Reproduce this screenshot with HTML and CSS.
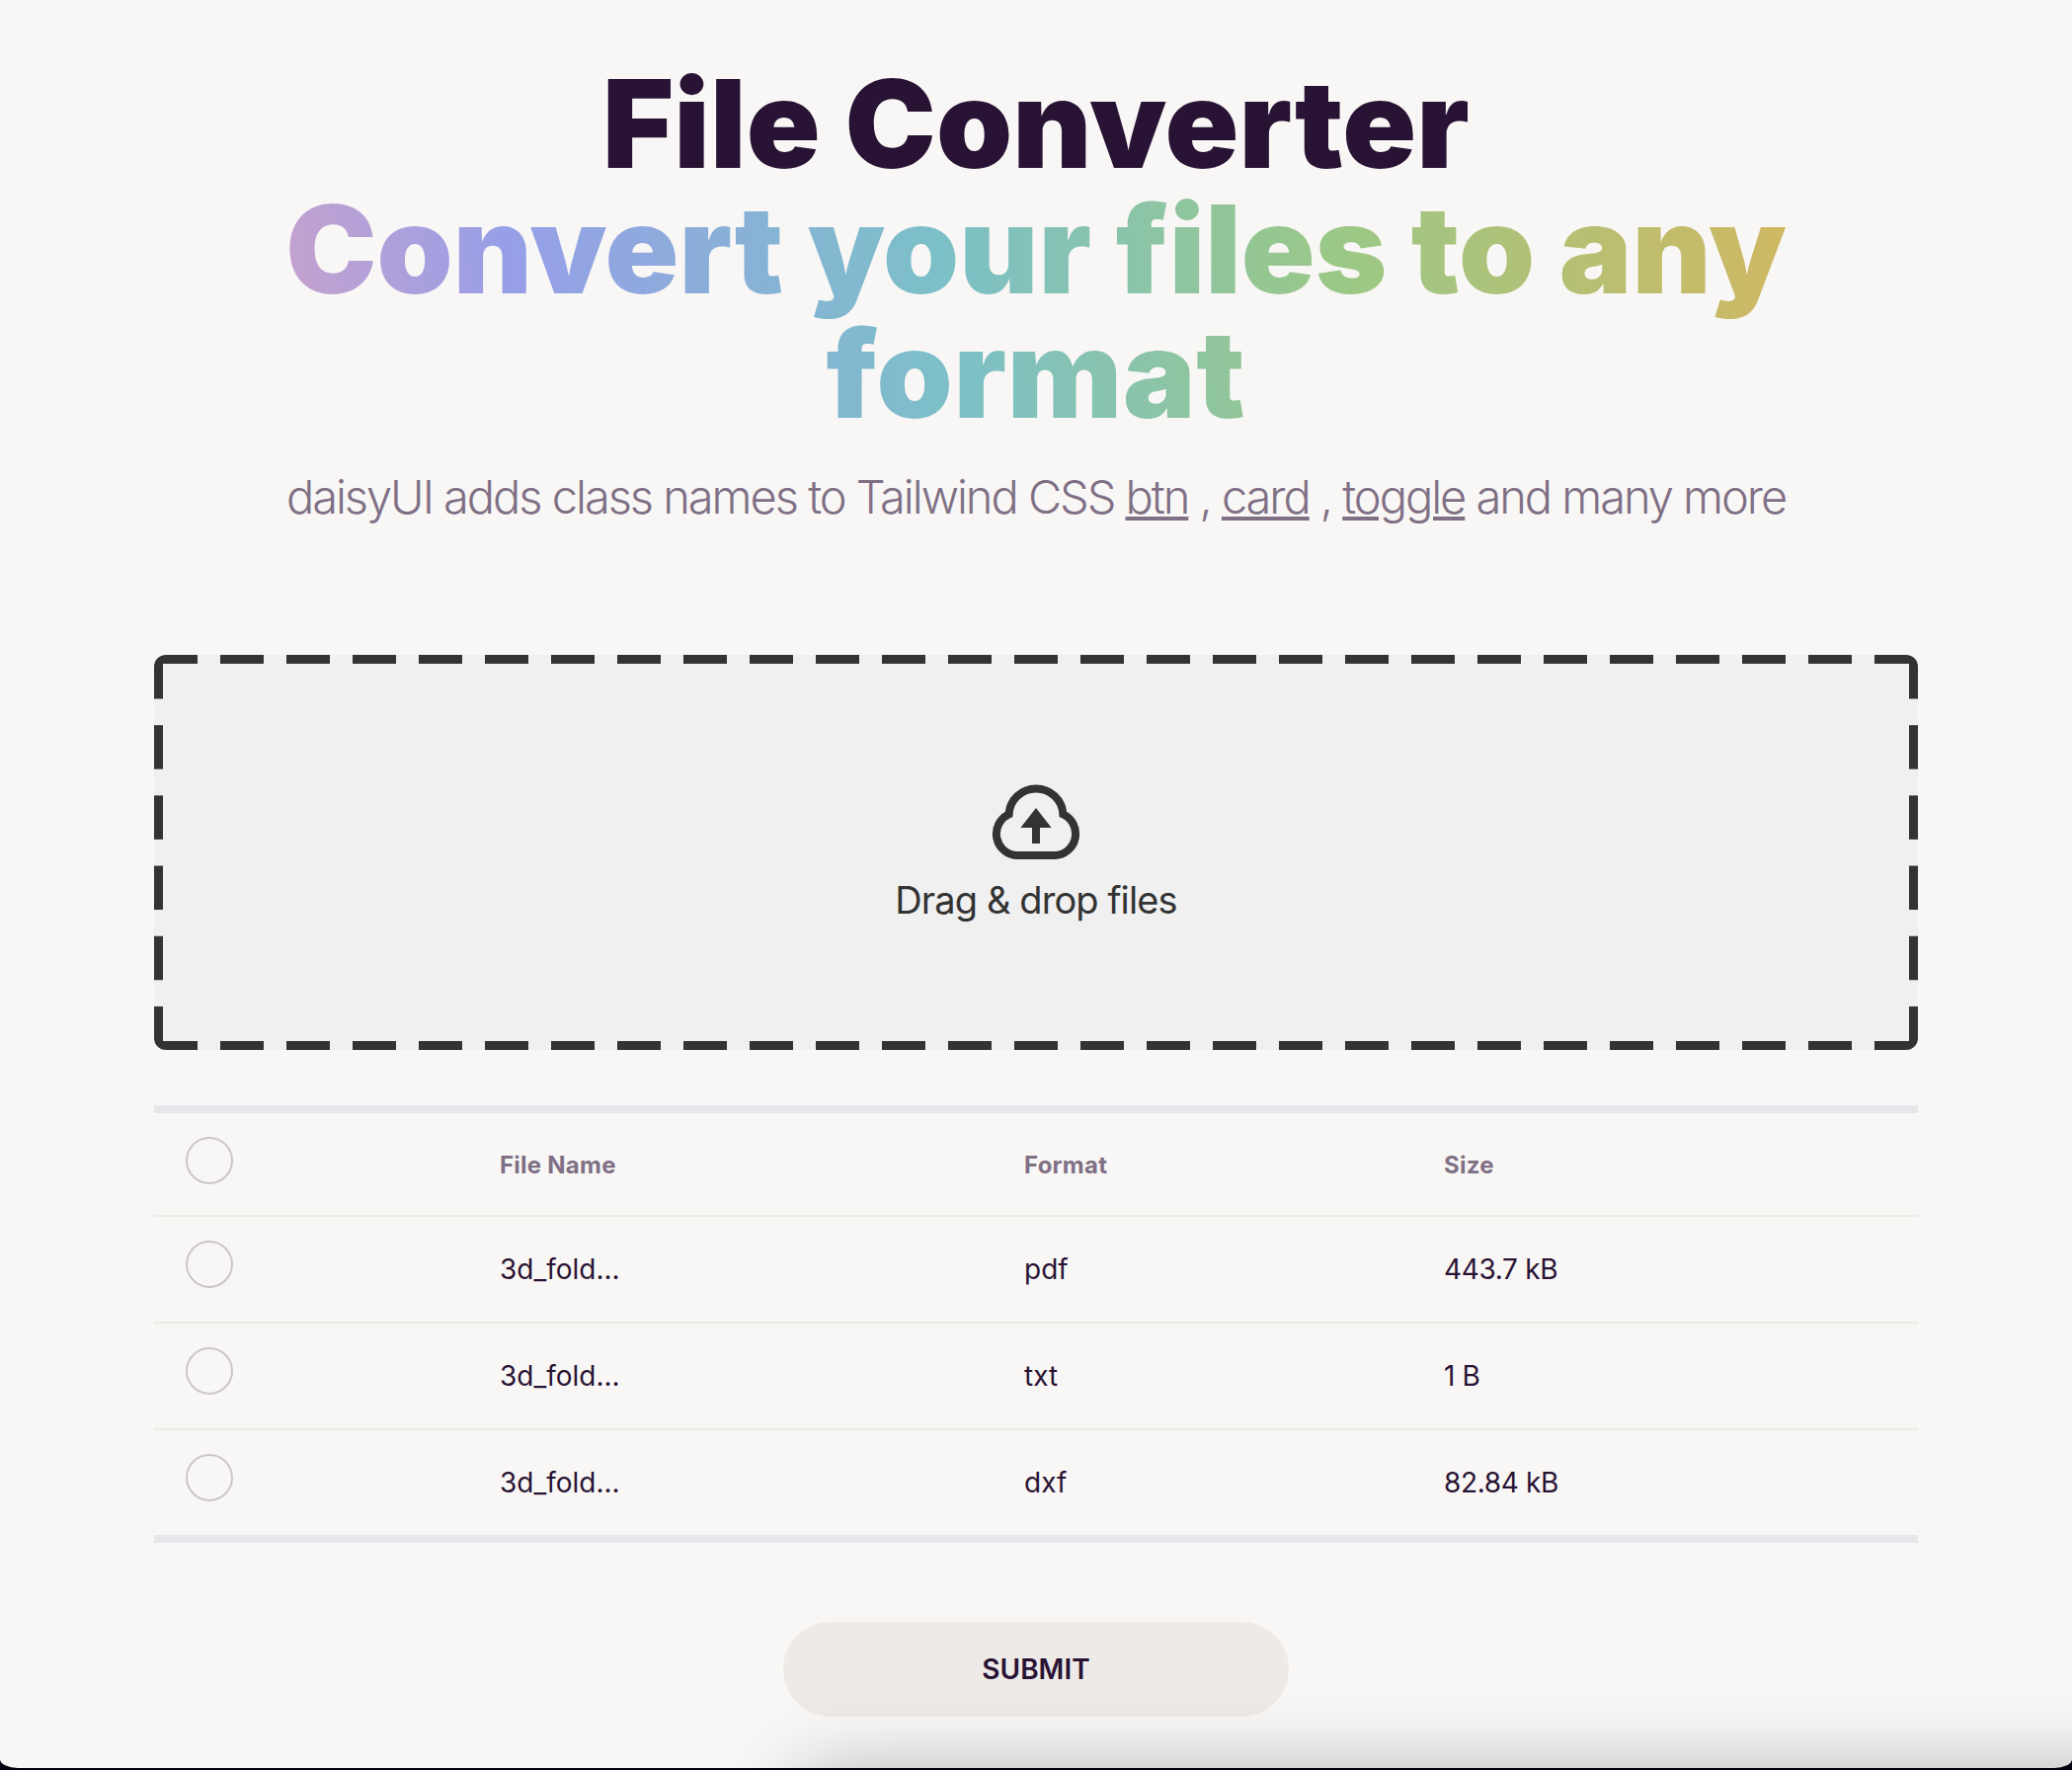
FILE: index.html
```html
<!DOCTYPE html>
<html lang="en">
<head>
<meta charset="utf-8">
<title>File Converter</title>
<link rel="stylesheet" href="styles.css">
</head>
<body>
<div class="window">
  <main class="page">
    <header class="hero">
      <h1 class="title"><span class="title-main">File Converter</span><span class="title-gradient"><span class="line">Convert your files to any</span> <span class="line line-last">format</span></span></h1>
      <p class="subtitle">daisyUI adds class names to Tailwind CSS <a>btn</a> , <a>card</a> , <a>toggle</a> and many more</p>
    </header>
    <section class="dropzone">
      <svg class="cloud" viewBox="0 0 24 24" fill="none">
        <path d="M5.15 10.1A6.86 6.86 0 0 1 18.85 10.1A5.45 5.45 0 0 1 16.7 20.5H7.3A5.45 5.45 0 0 1 5.15 10.1Z" stroke="currentColor" stroke-width="2"/>
        <path d="M13 17.5v-4h2.9L12 8.5l-3.9 5H11v4z" fill="currentColor"/>
      </svg>
      <span class="drop-label">Drag &amp; drop files</span>
    </section>
    <table class="files">
      <colgroup><col class="col-check"><col class="col-name"><col class="col-format"><col class="col-size"></colgroup>
      <thead>
        <tr><th><span class="check"></span></th><th>File Name</th><th>Format</th><th>Size</th></tr>
      </thead>
      <tbody>
        <tr><td><span class="check"></span></td><td>3d_fold...</td><td>pdf</td><td>443.7 kB</td></tr>
        <tr><td><span class="check"></span></td><td>3d_fold...</td><td>txt</td><td>1 B</td></tr>
        <tr><td><span class="check"></span></td><td>3d_fold...</td><td>dxf</td><td>82.84 kB</td></tr>
      </tbody>
    </table>
    <button class="submit">SUBMIT</button>
  </main>
  <div class="dock-shadow"></div>
</div>
</body>
</html>
```
FILE: styles.css
```css
* { box-sizing: border-box; }

body {
  margin: 0;
  height: 1792px;
  overflow: hidden;
  background: #03020f;
  font-family: Inter, "Liberation Sans", sans-serif;
  color: #291334;
}

.window {
  position: relative;
  height: 1790px;
  overflow: hidden;
  background: #f9f7f5;
  border-radius: 0 0 18px 18px / 0 0 9px 9px;
}

.page {
  display: flex;
  flex-direction: column;
  align-items: center;
  padding: 62px 156px 0;
}

.hero {
  width: 100%;
  height: 601px;
  text-align: center;
}

.title {
  margin: 0;
  font-size: 123.5px;
  line-height: 126.5px;
  font-weight: 900;
  letter-spacing: 0;
  white-space: nowrap;
}

.title-main { letter-spacing: 0.15px; }

.title-main,
.title-gradient,
.line { display: block; }

.line-last { letter-spacing: 0.7px; }

.title-gradient {
  padding-bottom: 20px;
  color: transparent;
  background: linear-gradient(84deg, #d4a2c5 4%, #979fe8 21%, #7cc0c8 45%, #9ac887 67%, #dfb357 100%);
  -webkit-background-clip: text;
  background-clip: text;
}

.subtitle {
  margin: 13.5px 0 0;
  font-size: 47px;
  line-height: 56px;
  font-weight: 300;
  letter-spacing: -2.05px;
  white-space: nowrap;
  color: #7f7085;
}

.subtitle a {
  text-decoration: underline;
  text-decoration-thickness: 4px;
  text-underline-offset: 3px;
}

.dropzone {
  width: 100%;
  height: 400px;
  display: flex;
  flex-direction: column;
  align-items: center;
  padding-top: 121px;
  border-radius: 12px;
  color: #333;
  background:
    linear-gradient(90deg, #333 44px, transparent 44px) 0 0 / 67px 9px repeat-x,
    linear-gradient(90deg, #333 44px, transparent 44px) 0 100% / 67px 9px repeat-x,
    linear-gradient(#333 44px, transparent 44px) 0 0 / 9px 71.2px repeat-y,
    linear-gradient(#333 44px, transparent 44px) 100% 0 / 9px 71.2px repeat-y,
    #f0f0f0;
}

.cloud { width: 96px; height: 96px; }

.drop-label {
  margin-top: 8px;
  font-size: 38px;
  line-height: 46px;
  letter-spacing: -0.9px;
}

.files {
  width: 100%;
  margin-top: 56px;
  table-layout: fixed;
  border-collapse: separate;
  border-spacing: 0;
  border-top: 8px solid #e5e7eb;
  border-bottom: 8px solid #e5e7eb;
  font-size: 28px;
  line-height: 40px;
}

.col-check { width: 318px; }
.col-name { width: 531px; }
.col-format { width: 425px; }
.col-size { width: 512px; }

.files th,
.files td {
  height: 108px;
  padding: 0 32px;
  text-align: left;
  vertical-align: middle;
  border-bottom: 2px solid #eceae6;
}

.files th {
  height: 105px;
  padding-top: 2px;
  font-size: 24px;
  font-weight: 700;
  letter-spacing: 0.25px;
  color: #7f7085;
}

.files td:last-child { letter-spacing: -0.35px; }

.files tbody tr:last-child td { height: 106px; border-bottom: 0; }

.check {
  display: block;
  width: 48px;
  height: 48px;
  margin-bottom: 10px;
  border: 2px solid #cac6cc;
  border-radius: 50%;
}

.files th .check { margin-bottom: 9px; }

.submit {
  width: 512px;
  height: 96px;
  margin-top: 80px;
  padding: 0;
  border: 0;
  border-radius: 48px;
  background: #eeeae7;
  color: #291334;
  font: 600 28px/28px Inter, "Liberation Sans", sans-serif;
}

/* shadow of the floating panel just below the window edge */
.dock-shadow {
  position: absolute;
  top: 1805px;
  left: 815px;
  width: 1600px;
  height: 400px;
  box-shadow: 0 0 80px rgba(0, 0, 0, 0.36);
}
```
